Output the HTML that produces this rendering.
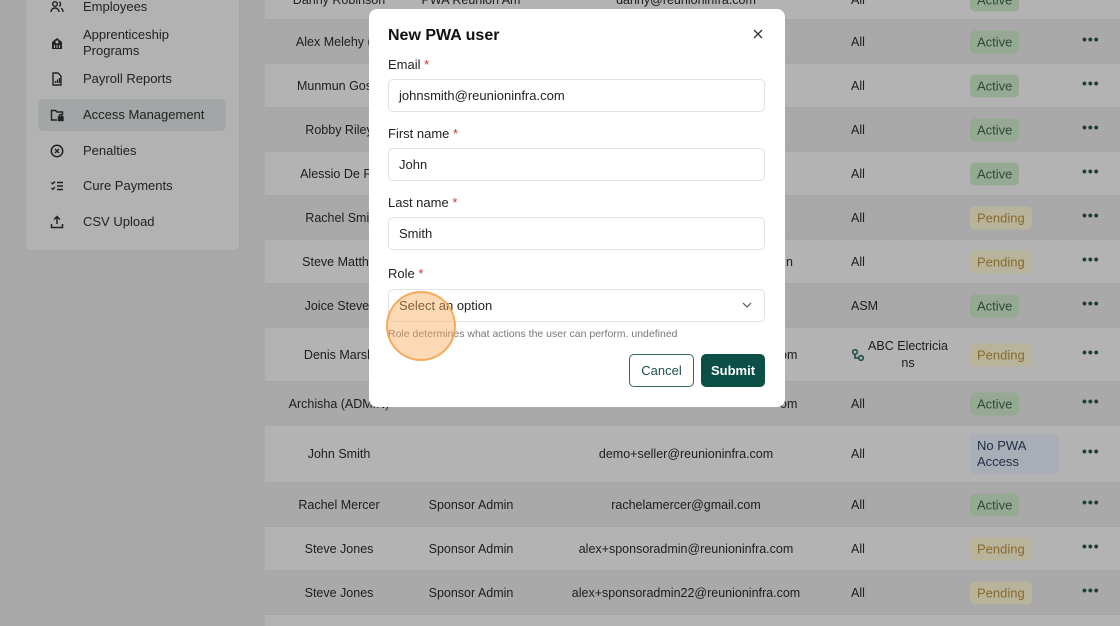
<!DOCTYPE html>
<html><head><meta charset="utf-8"><style>
*{box-sizing:border-box;margin:0;padding:0}
html{width:1120px;height:626px;overflow:hidden}
body{width:1120px;height:626px;overflow:hidden;background:#a9a9a9;font-family:"Liberation Sans",sans-serif;color:#1d1d1d;position:relative;font-size:13px}
.side{position:absolute;left:25px;top:-10px;width:215px;height:261px;background:#b2b2b2;border:1px solid #a4a4a4;border-radius:6px}
.nav{position:absolute;left:38px;width:188px;height:32px;display:flex;align-items:center;font-size:13px;color:#222}
.nav svg{position:absolute;left:12px}
.nav span{position:absolute;left:45px;line-height:16px}
.act{background:#a2a6a6;border-radius:6px}
.tbl{position:absolute;left:265px;top:0;width:855px;height:626px;background:#b3b3b3;overflow:hidden}
.row{position:absolute;left:0;width:855px;border-top:1px solid #a6a6a6}
.d{background:#a9a9a9}
.c{position:absolute;transform:translate(-50%,-50%);white-space:nowrap;font-size:12.5px}
.l{position:absolute;transform:translateY(-50%);white-space:nowrap;font-size:12.5px}
.b{position:absolute;transform:translateY(-50%);border-radius:5px;padding:4px 7px;font-size:13px}
.ba{background:#95a993;color:#2b4c33}
.bp{background:#b8b39b;color:#8a6a2e}
.dots{position:absolute;left:817px;transform:translateY(-50%);font-size:14px;font-weight:bold;letter-spacing:1px;color:#1f3c3a}
.modal{position:absolute;left:369px;top:9px;width:416px;height:398px;background:#fff;border-radius:8px}
.lab{position:absolute;left:19px;font-size:13px;color:#222}
.lab i{color:#c33;font-style:normal}
.inp{position:absolute;left:19px;width:377px;height:33px;border:1px solid #e2e2e2;border-radius:5px;padding-left:10px;line-height:31px;font-size:13px;color:#222}
</style></head><body>
<div class="side"></div>
<div class="nav" style="top:-9px"><svg width="14" height="14" viewBox="0 0 14 14" fill="none" stroke="#222" stroke-width="1.4"><circle cx="5" cy="4" r="2.3"/><path d="M1 12c0-2.5 2-4 4-4s4 1.5 4 4M9 2a2.2 2.2 0 010 4.2M11 8.3c1.3.6 2 1.8 2 3.7"/></svg><span>Employees</span></div>
<div class="nav" style="top:27px"><svg width="14" height="14" viewBox="0 0 14 14"><path d="M2 13V6l5-4 5 4v7z" fill="#222"/><circle cx="7" cy="6" r="1.5" fill="#b2b2b2"/><rect x="4" y="9" width="1" height="3" fill="#b2b2b2"/><rect x="6.5" y="9" width="1" height="3" fill="#b2b2b2"/><rect x="9" y="9" width="1" height="3" fill="#b2b2b2"/></svg><span>Apprenticeship<br>Programs</span></div>
<div class="nav" style="top:63px"><svg width="14" height="14" viewBox="0 0 14 14" fill="none" stroke="#222" stroke-width="1.4"><path d="M3 1h5l3 3v9H3z"/><path d="M5.5 11V9M7.5 11V7.5M9.5 11V6" /></svg><span>Payroll Reports</span></div>
<div class="nav act" style="top:99px"><svg width="14" height="14" viewBox="0 0 14 14" fill="none" stroke="#222" stroke-width="1.4"><path d="M7 12H1.5V2.5h4l1.5 1.5h5.5v3"/><rect x="8.5" y="9" width="4.5" height="3.5" fill="#222"/><path d="M9.5 9V7.8a1.2 1.2 0 012.4 0V9"/></svg><span>Access Management</span></div>
<div class="nav" style="top:135px"><svg width="14" height="14" viewBox="0 0 14 14" fill="none" stroke="#222" stroke-width="1.5"><circle cx="7" cy="7" r="5.7"/><path d="M5 5l4 4M9 5l-4 4"/></svg><span>Penalties</span></div>
<div class="nav" style="top:170px"><svg width="14" height="14" viewBox="0 0 14 14" fill="none" stroke="#222" stroke-width="1.4"><path d="M1.5 3.5l1.3 1.3L5 2.5M1.5 9l1.3 1.3L5 8M7 3.5h6M7 7h6M7 10.5h6"/></svg><span>Cure Payments</span></div>
<div class="nav" style="top:206px"><svg width="14" height="14" viewBox="0 0 14 14" fill="none" stroke="#222" stroke-width="1.5"><path d="M7 9V2M4 4.5L7 1.5l3 3M1.5 9v3.5h11V9"/></svg><span>CSV Upload</span></div>

<div class="tbl">
<div class="row" style="top:-1px;height:20px"><span class="c" style="left:74px;top:0">Danny Robinson</span><span class="c" style="left:206px;top:0">PWA Reunion Am</span><span class="c" style="left:421px;top:0">danny@reunioninfra.com</span><span class="l" style="left:586px;top:0">All</span><span class="b ba" style="left:705px;top:0">Active</span></div>
<div class="row d" style="top:19px;height:44px"><span class="c" style="left:74px;top:22px">Alex Melehy (M</span><span class="l" style="left:586px;top:22px">All</span><span class="b ba" style="left:705px;top:22px">Active</span><span class="dots" style="top:19px">•••</span></div>
<div class="row" style="top:63px;height:44px"><span class="c" style="left:74px;top:22px">Munmun Gosw</span><span class="l" style="left:586px;top:22px">All</span><span class="b ba" style="left:705px;top:22px">Active</span><span class="dots" style="top:19px">•••</span></div>
<div class="row d" style="top:107px;height:44px"><span class="c" style="left:74px;top:22px">Robby Riley</span><span class="l" style="left:586px;top:22px">All</span><span class="b ba" style="left:705px;top:22px">Active</span><span class="dots" style="top:19px">•••</span></div>
<div class="row" style="top:151px;height:44px"><span class="c" style="left:74px;top:22px">Alessio De Fa</span><span class="l" style="left:586px;top:22px">All</span><span class="b ba" style="left:705px;top:22px">Active</span><span class="dots" style="top:19px">•••</span></div>
<div class="row d" style="top:195px;height:44px"><span class="c" style="left:74px;top:22px">Rachel Smit</span><span class="l" style="left:586px;top:22px">All</span><span class="b bp" style="left:705px;top:22px">Pending</span><span class="dots" style="top:19px">•••</span></div>
<div class="row" style="top:239px;height:44px"><span class="c" style="left:74px;top:22px">Steve Matthe</span><span class="l" style="left:521px;top:22px">n</span><span class="l" style="left:586px;top:22px">All</span><span class="b bp" style="left:705px;top:22px">Pending</span><span class="dots" style="top:19px">•••</span></div>
<div class="row d" style="top:283px;height:44px"><span class="c" style="left:74px;top:22px">Joice Stever</span><span class="l" style="left:586px;top:22px">ASM</span><span class="b ba" style="left:705px;top:22px">Active</span><span class="dots" style="top:19px">•••</span></div>
<div class="row" style="top:327px;height:54px"><span class="c" style="left:74px;top:27px">Denis Marsh</span><span class="l" style="left:515px;top:27px">om</span><svg style="position:absolute;left:586px;top:20px" width="14" height="14" viewBox="0 0 14 14" fill="none" stroke="#1f4f48" stroke-width="1.6"><circle cx="4" cy="4" r="2.3"/><circle cx="10" cy="10" r="2.3"/><path d="M4 6.3V10h3.7"/></svg><span class="c" style="left:643px;top:27px;text-align:center;line-height:17px">ABC Electricia<br>ns</span><span class="b bp" style="left:705px;top:27px">Pending</span><span class="dots" style="top:24px">•••</span></div>
<div class="row d" style="top:381px;height:44px"><span class="c" style="left:74px;top:22px">Archisha (ADMIN)</span><span class="l" style="left:515px;top:22px">om</span><span class="l" style="left:586px;top:22px">All</span><span class="b ba" style="left:705px;top:22px">Active</span><span class="dots" style="top:19px">•••</span></div>
<div class="row" style="top:425px;height:57px"><span class="c" style="left:74px;top:28px">John Smith</span><span class="c" style="left:421px;top:28px">demo+seller@reunioninfra.com</span><span class="l" style="left:586px;top:28px">All</span><span class="b" style="left:705px;top:28px;background:#a9adb6;color:#22304a;width:89px;line-height:16px">No PWA<br>Access</span><span class="dots" style="top:25px">•••</span></div>
<div class="row d" style="top:482px;height:44px"><span class="c" style="left:74px;top:22px">Rachel Mercer</span><span class="c" style="left:206px;top:22px">Sponsor Admin</span><span class="c" style="left:421px;top:22px">rachelamercer@gmail.com</span><span class="l" style="left:586px;top:22px">All</span><span class="b ba" style="left:705px;top:22px">Active</span><span class="dots" style="top:19px">•••</span></div>
<div class="row" style="top:526px;height:44px"><span class="c" style="left:74px;top:22px">Steve Jones</span><span class="c" style="left:206px;top:22px">Sponsor Admin</span><span class="c" style="left:421px;top:22px">alex+sponsoradmin@reunioninfra.com</span><span class="l" style="left:586px;top:22px">All</span><span class="b bp" style="left:705px;top:22px">Pending</span><span class="dots" style="top:19px">•••</span></div>
<div class="row d" style="top:570px;height:44px"><span class="c" style="left:74px;top:22px">Steve Jones</span><span class="c" style="left:206px;top:22px">Sponsor Admin</span><span class="c" style="left:421px;top:22px">alex+sponsoradmin22@reunioninfra.com</span><span class="l" style="left:586px;top:22px">All</span><span class="b bp" style="left:705px;top:22px">Pending</span><span class="dots" style="top:19px">•••</span></div>
<div class="row" style="top:614px;height:12px"></div>
</div>

<div class="modal">
<div style="position:absolute;left:19px;top:18px;font-size:16px;font-weight:bold;color:#111">New PWA user</div>
<svg style="position:absolute;left:384px;top:20px" width="10" height="10" viewBox="0 0 10 10" stroke="#333" stroke-width="1.3"><path d="M1 1l8 8M9 1l-8 8"/></svg>
<div class="lab" style="top:48px">Email <i>*</i></div>
<div class="inp" style="top:70px">johnsmith@reunioninfra.com</div>
<div class="lab" style="top:117px">First name <i>*</i></div>
<div class="inp" style="top:139px">John</div>
<div class="lab" style="top:186px">Last name <i>*</i></div>
<div class="inp" style="top:208px">Smith</div>
<div class="lab" style="top:257px">Role <i>*</i></div>
<div class="inp" style="top:280px">Select an option<svg style="position:absolute;right:12px;top:12px" width="10" height="7" viewBox="0 0 10 7" fill="none" stroke="#555" stroke-width="1.2"><path d="M1 1l4 4 4-4"/></svg></div>
<div style="position:absolute;left:19px;top:319px;font-size:10.5px;color:#777">Role determines what actions the user can perform. undefined</div>
<div style="position:absolute;left:260px;top:345px;width:65px;height:33px;border:1px solid #2e6a63;border-radius:5px;text-align:center;line-height:31px;color:#1f4f48;font-size:13px">Cancel</div>
<div style="position:absolute;left:332px;top:345px;width:64px;height:33px;background:#0b4f47;border-radius:5px;text-align:center;line-height:33px;color:#fff;font-weight:bold;font-size:13px">Submit</div>
</div>
<div style="position:absolute;left:386px;top:291px;width:70px;height:70px;border-radius:50%;background:rgba(250,170,90,0.45);border:2px solid rgba(245,160,70,0.8)"></div>
</body></html>
